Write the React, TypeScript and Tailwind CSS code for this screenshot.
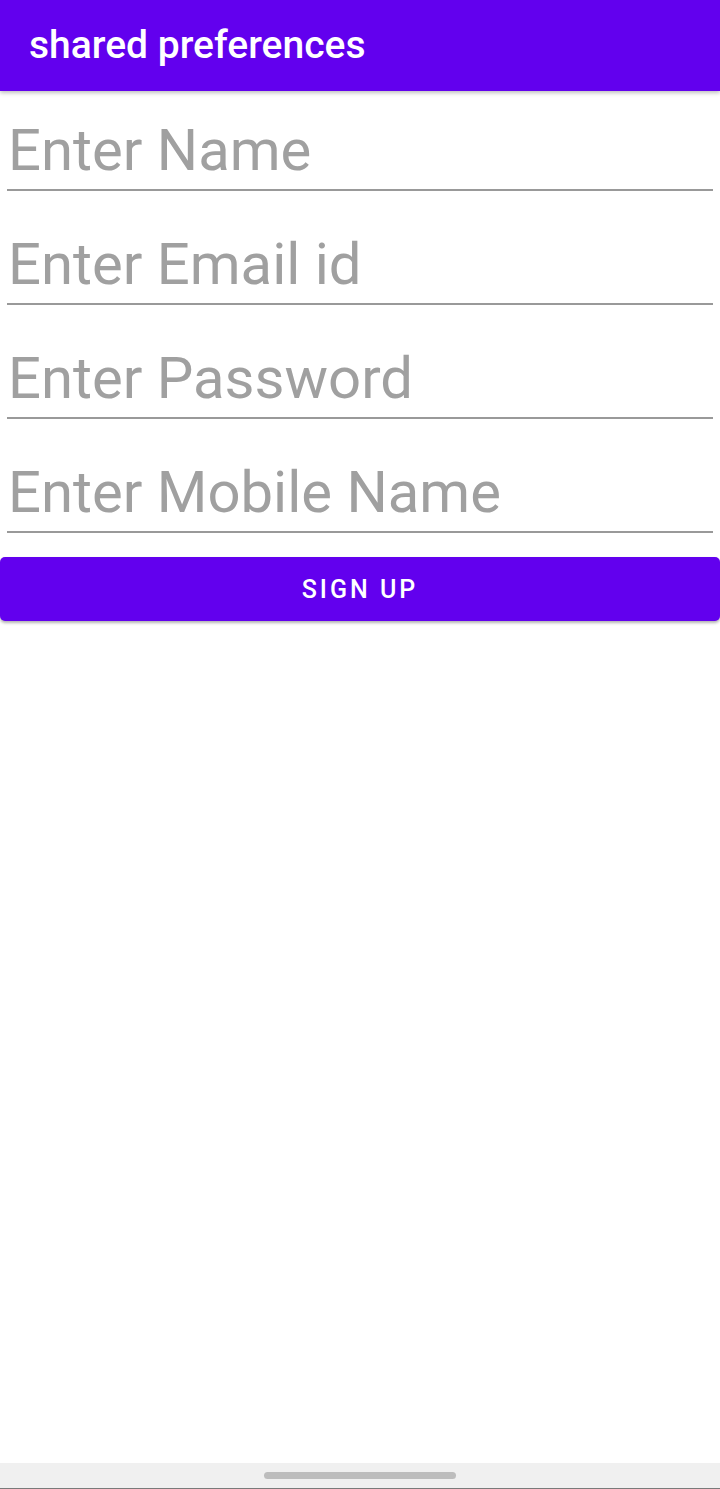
const fields = ["Enter Name", "Enter Email id", "Enter Password", "Enter Mobile Name"];

export default function App() {
  return (
    <div className="flex h-[1489px] flex-col bg-white font-['Roboto','Liberation_Sans',sans-serif]">
      {/* Toolbar */}
      <header className="relative z-10 flex h-[91px] shrink-0 items-center bg-[#6200ee] pl-[29px] shadow-[0_2px_4px_rgba(0,0,0,0.25)]">
        <h1 className="text-[39px] leading-none font-medium text-white">shared preferences</h1>
      </header>

      {/* Form */}
      <main className="flex-1">
        <div className="px-[7px] pt-[31px]">
          {fields.map((label, i) => (
            <div key={label} className={i === 0 ? "" : "pt-[45px]"}>
              <div className="pl-[1px] text-[58px] leading-[56px] text-[#a0a0a0]">{label}</div>
              <div className="mt-[11px] h-[2px] bg-[#999999]" />
            </div>
          ))}
        </div>
        <button className="mt-[24px] flex h-[64px] w-full items-center justify-center rounded-[5px] bg-[#6200ee] pt-[2px] text-[25px] font-medium tracking-[0.12em] text-white shadow-[0_2px_3px_rgba(0,0,0,0.3)]">
          SIGN UP
        </button>
      </main>

      {/* System navigation bar */}
      <footer className="flex h-[26px] shrink-0 flex-col bg-[#f0f0f0]">
        <div className="flex flex-1 items-center justify-center">
          <div className="h-[7px] w-[192px] rounded-full bg-[#bdbdbd]" />
        </div>
        <div className="h-px bg-[#7a7a7a]" />
      </footer>
    </div>
  );
}
